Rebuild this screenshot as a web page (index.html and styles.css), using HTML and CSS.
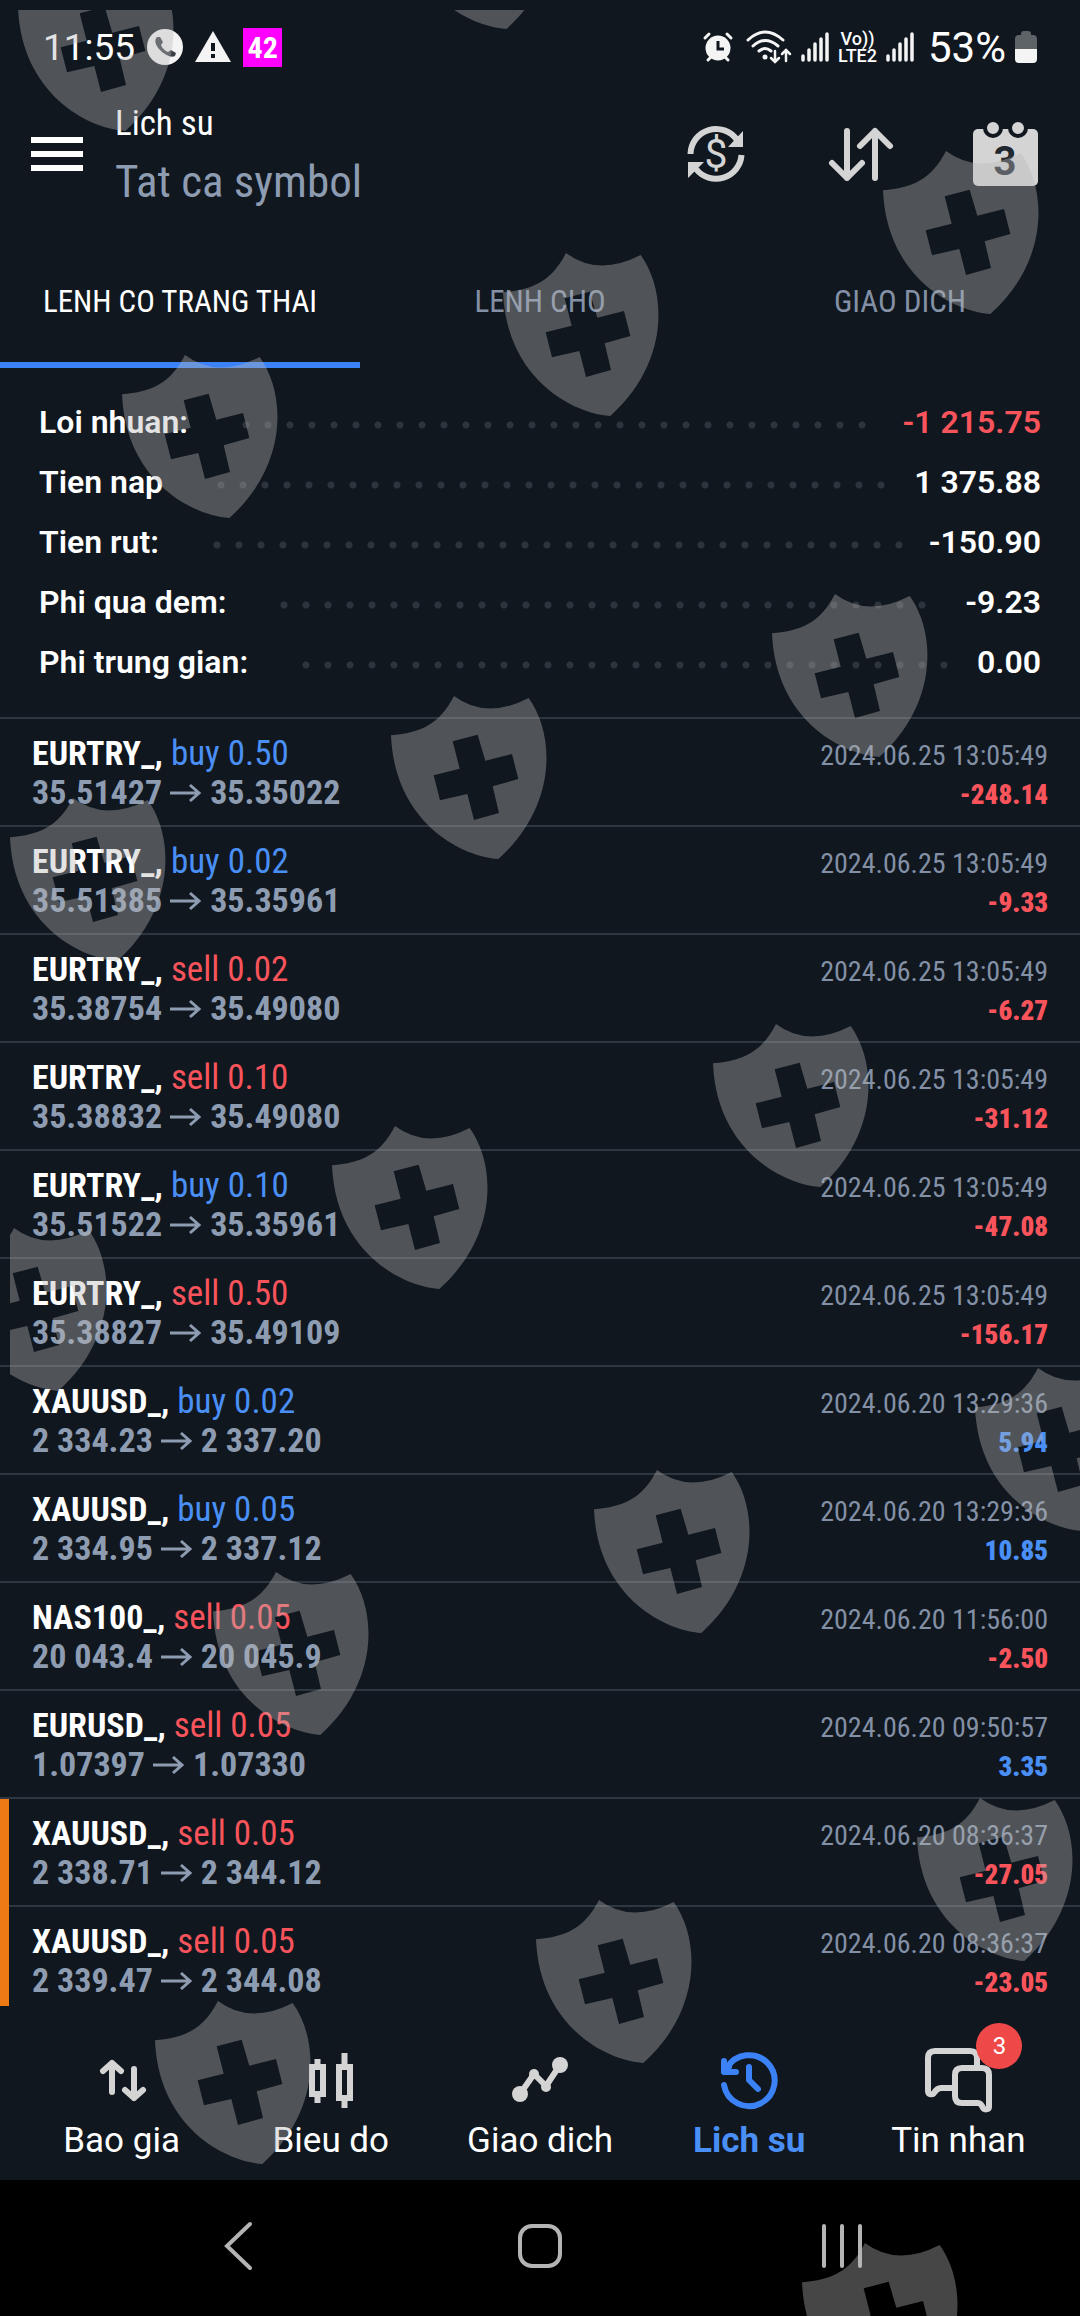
FILE: index.html
```
<!DOCTYPE html>
<html lang="vi">
<head>
<meta charset="utf-8">
<meta name="viewport" content="width=device-width, initial-scale=1">
<title>Lich su</title>
<link rel="stylesheet" href="styles.css">
</head>
<body>
<div class="app">
  <div class="status">
    <div class="status-group status-left">
      <span class="clock">11:55</span>
      <svg width="36" height="36" viewBox="0 0 36 36"><circle cx="18" cy="18" r="18" fill="#f4f4f4"/><path d="M10 8c-3 3-2 8 3 13s11 8 15 6l1-3-5-3-3 2c-3-1-6-4-7-7l2-3-3-5z" fill="#3c4147"/></svg>
      <svg width="36" height="32" viewBox="0 0 36 32"><path d="M18 0 36 31H0z" fill="#f4f4f4"/><path d="M16 12h4v8h-4zM16 23h4v4h-4z" fill="#10171f"/></svg>
      <span class="tag">42</span>
    </div>
    <div class="status-group status-right">
      <svg width="30" height="30" viewBox="0 0 30 30" fill="none" stroke="#f4f4f4" stroke-width="3" stroke-linecap="round"><circle cx="15" cy="16" r="12.500" fill="#f4f4f4" stroke="none"/><path d="M2 6l4-4M28 6l-4-4M5 28l3-3M25 28l-3-3"/><path d="M15 9v8h6" stroke="#10171f" stroke-linecap="butt"/></svg>
      <svg class="wifi" width="46" height="34" viewBox="0 0 46 34" fill="none" stroke="#f4f4f4" stroke-width="3" stroke-linecap="round"><path d="M2 10q17-16 35 0M7 16q12-11 25 0M13 21q6-5 12 0"/><circle cx="19" cy="27" r="2.500" fill="#f4f4f4" stroke="none"/><path d="M29 21v11M25 28l4 4 4-4M40 31V20M36 24l4-4 4 4" stroke-width="2.500"/></svg>
      <svg class="bars" width="28" height="30" viewBox="0 0 28 30" stroke="#f4f4f4" stroke-width="3.500" stroke-linecap="round"><path d="M2 24v4M8 18v10M14 12v16M20 7v21M26 2v26"/></svg>
      <span class="volte"><span>Vo))</span><span>LTE2</span></span>
      <svg class="bars" width="28" height="30" viewBox="0 0 28 30" stroke="#f4f4f4" stroke-width="3.500" stroke-linecap="round"><path d="M2 24v4M8 18v10M14 12v16M20 7v21M26 2v26"/></svg>
      <span class="percent">53%</span>
      <svg width="22" height="32" viewBox="0 0 22 32"><path d="M6 3q0-3 3-3h4q3 0 3 3v1h2q4 0 4 4v10H0V8q0-4 4-4h2z" fill="#5d6367"/><path d="M0 18h22v10q0 4-4 4H4q-4 0-4-4z" fill="#f4f4f4"/></svg>
    </div>
  </div>

  <header class="header">
    <button class="menu" aria-label="Menu"><span></span><span></span><span></span></button>
    <div class="titles">
      <h1>Lich su</h1>
      <p>Tat ca symbol</p>
    </div>
    <div class="actions">
      <button aria-label="Currency"><svg width="66" height="66" viewBox="0 0 66 66" fill="none" stroke="#d4d4d4" stroke-width="6"><path d="M7.500 33A25.500 25.500 0 0 1 54 19"/><path d="M58.500 34A25.500 25.500 0 0 1 13 48"/><path d="M60 10v16H45zM5 57V41h16z" fill="#d4d4d4" stroke="none"/><text x="33" y="47" text-anchor="middle" class="dollar">$</text></svg></button>
      <button aria-label="Sort"><svg width="66" height="66" viewBox="0 0 66 66" fill="none" stroke="#d4d4d4" stroke-width="6" stroke-linecap="round" stroke-linejoin="round"><path d="M19 10v47M4 42l15 15 15-15M47 57V10M32 25l15-15 15 15"/></svg></button>
      <button aria-label="Calendar"><svg width="66" height="66" viewBox="0 0 66 66"><rect x="0" y="8" width="65" height="57" rx="5" fill="#d4d4d4"/><g fill="#d4d4d4" stroke="#10171f" stroke-width="4"><circle cx="20" cy="7" r="8"/><circle cx="45" cy="7" r="8"/></g><text x="32" y="54" text-anchor="middle" class="day">3</text></svg></button>
    </div>
  </header>

  <nav class="tabs">
    <button class="tab active">LENH CO TRANG THAI</button>
    <button class="tab">LENH CHO</button>
    <button class="tab">GIAO DICH</button>
  </nav>

  <dl class="summary">
    <div><dt>Loi nhuan:</dt><dd><i class="dots"></i><b class="down">-1 215.75</b></dd></div>
    <div><dt>Tien nap</dt><dd><i class="dots"></i><b>1 375.88</b></dd></div>
    <div><dt>Tien rut:</dt><dd><i class="dots"></i><b>-150.90</b></dd></div>
    <div><dt>Phi qua dem:</dt><dd><i class="dots"></i><b>-9.23</b></dd></div>
    <div><dt>Phi trung gian:</dt><dd><i class="dots"></i><b>0.00</b></dd></div>
  </dl>

  <ul class="deals">
    <li><p><b>EURTRY_,</b> <span class="up">buy 0.50</span><time>2024.06.25 13:05:49</time></p><p class="price">35.51427 <svg class="arrow" viewBox="0 0 32 20"><path d="M0 10h29M20 2l9 8-9 8"/></svg> 35.35022<strong class="down">-248.14</strong></p></li>
    <li><p><b>EURTRY_,</b> <span class="up">buy 0.02</span><time>2024.06.25 13:05:49</time></p><p class="price">35.51385 <svg class="arrow" viewBox="0 0 32 20"><path d="M0 10h29M20 2l9 8-9 8"/></svg> 35.35961<strong class="down">-9.33</strong></p></li>
    <li><p><b>EURTRY_,</b> <span class="down">sell 0.02</span><time>2024.06.25 13:05:49</time></p><p class="price">35.38754 <svg class="arrow" viewBox="0 0 32 20"><path d="M0 10h29M20 2l9 8-9 8"/></svg> 35.49080<strong class="down">-6.27</strong></p></li>
    <li><p><b>EURTRY_,</b> <span class="down">sell 0.10</span><time>2024.06.25 13:05:49</time></p><p class="price">35.38832 <svg class="arrow" viewBox="0 0 32 20"><path d="M0 10h29M20 2l9 8-9 8"/></svg> 35.49080<strong class="down">-31.12</strong></p></li>
    <li><p><b>EURTRY_,</b> <span class="up">buy 0.10</span><time>2024.06.25 13:05:49</time></p><p class="price">35.51522 <svg class="arrow" viewBox="0 0 32 20"><path d="M0 10h29M20 2l9 8-9 8"/></svg> 35.35961<strong class="down">-47.08</strong></p></li>
    <li><p><b>EURTRY_,</b> <span class="down">sell 0.50</span><time>2024.06.25 13:05:49</time></p><p class="price">35.38827 <svg class="arrow" viewBox="0 0 32 20"><path d="M0 10h29M20 2l9 8-9 8"/></svg> 35.49109<strong class="down">-156.17</strong></p></li>
    <li><p><b>XAUUSD_,</b> <span class="up">buy 0.02</span><time>2024.06.20 13:29:36</time></p><p class="price">2 334.23 <svg class="arrow" viewBox="0 0 32 20"><path d="M0 10h29M20 2l9 8-9 8"/></svg> 2 337.20<strong class="up">5.94</strong></p></li>
    <li><p><b>XAUUSD_,</b> <span class="up">buy 0.05</span><time>2024.06.20 13:29:36</time></p><p class="price">2 334.95 <svg class="arrow" viewBox="0 0 32 20"><path d="M0 10h29M20 2l9 8-9 8"/></svg> 2 337.12<strong class="up">10.85</strong></p></li>
    <li><p><b>NAS100_,</b> <span class="down">sell 0.05</span><time>2024.06.20 11:56:00</time></p><p class="price">20 043.4 <svg class="arrow" viewBox="0 0 32 20"><path d="M0 10h29M20 2l9 8-9 8"/></svg> 20 045.9<strong class="down">-2.50</strong></p></li>
    <li><p><b>EURUSD_,</b> <span class="down">sell 0.05</span><time>2024.06.20 09:50:57</time></p><p class="price">1.07397 <svg class="arrow" viewBox="0 0 32 20"><path d="M0 10h29M20 2l9 8-9 8"/></svg> 1.07330<strong class="up">3.35</strong></p></li>
    <li class="marked"><p><b>XAUUSD_,</b> <span class="down">sell 0.05</span><time>2024.06.20 08:36:37</time></p><p class="price">2 338.71 <svg class="arrow" viewBox="0 0 32 20"><path d="M0 10h29M20 2l9 8-9 8"/></svg> 2 344.12<strong class="down">-27.05</strong></p></li>
    <li class="marked"><p><b>XAUUSD_,</b> <span class="down">sell 0.05</span><time>2024.06.20 08:36:37</time></p><p class="price">2 339.47 <svg class="arrow" viewBox="0 0 32 20"><path d="M0 10h29M20 2l9 8-9 8"/></svg> 2 344.08<strong class="down">-23.05</strong></p></li>
  </ul>

  <nav class="dock">
    <a href="#quotes"><svg viewBox="0 0 64 64" stroke-width="6" stroke-linecap="round" stroke-linejoin="round"><path d="M22 43V14M13 22l9-8 9 8M44 20v29M35 41l9 8 9-8"/></svg>Bao gia</a>
    <a href="#charts"><svg viewBox="0 0 64 64" stroke-width="6"><path d="M13 18h11v27H13zM18.500 10v7M18.500 46v8M40 18h11v31H40zM45.500 4v13M45.500 50v9"/></svg>Bieu do</a>
    <a href="#trade"><svg viewBox="0 0 64 64" stroke-width="6" stroke-linejoin="round"><path d="M12 45 26 25 38 37 52 16"/><g fill="#d4d4d4" stroke="none"><circle cx="12" cy="45" r="8"/><circle cx="26" cy="25" r="5"/><circle cx="38" cy="38" r="5"/><circle cx="52" cy="16" r="8"/></g></svg>Giao dich</a>
    <a href="#history" class="current"><svg viewBox="0 0 64 64" stroke-width="6" stroke-linecap="round" stroke-linejoin="round"><path d="M7 36A25.500 25.500 0 1 0 10 19M7 12v11h12M7 23l5-5"/><path d="M32 18v13l9 9"/></svg>Lich su</a>
    <a href="#messages"><span class="messages"><svg viewBox="0 0 64 64" stroke-width="6" stroke-linejoin="round"><path d="M51 18V9q0-7-7-7H9Q2 2 2 9v33c0 4 5 4 6 2q3-5 7-5h13"/><path d="M36 19h20q7 0 7 7v32c0 3-5 3-6 1q-2-5-5-5H36q-7 0-7-7V26q0-7 7-7z"/></svg><span class="badge">3</span></span>Tin nhan</a>
  </nav>

  <div class="system">
    <button aria-label="Back"><svg width="48" height="48" viewBox="0 0 48 48"><path d="M35 2 12 24l23 22"/></svg></button>
    <button aria-label="Home"><svg width="48" height="48" viewBox="0 0 48 48"><rect x="4" y="4" width="40" height="40" rx="12"/></svg></button>
    <button aria-label="Recents"><svg width="48" height="48" viewBox="0 0 48 48"><path d="M7 4v40M25 4v40M43 4v40"/></svg></button>
  </div>

  <svg class="watermark" aria-hidden="true">
    <defs>
      <clipPath id="edge"><rect x="10" y="10" width="100%" height="100%"/></clipPath>
      <symbol id="shield" viewBox="0 0 468 492" width="156" height="164" overflow="visible">
        <path fill-rule="evenodd" d="M0 118C90 110 145 85 189 0Q285 72 413 6C492 115 500 330 322 489 200 480 10 370 0 118zM185 136l75-20 23 78 80-20 19 75-77 22 19 80-75 21-20-78-82 19-19-75 78-20z"/>
      </symbol>
    </defs>
    <g clip-path="url(#edge)">
      <use href="#shield" x="18" y="-32"/><use href="#shield" x="399" y="-134"/>
      <use href="#shield" x="122" y="355"/><use href="#shield" x="503" y="253"/><use href="#shield" x="883" y="151"/>
      <use href="#shield" x="10" y="798"/><use href="#shield" x="391" y="696"/><use href="#shield" x="772" y="594"/>
      <use href="#shield" x="-49" y="1228"/><use href="#shield" x="332" y="1126"/><use href="#shield" x="713" y="1024"/>
      <use href="#shield" x="213" y="1572"/><use href="#shield" x="594" y="1470"/><use href="#shield" x="975" y="1368"/>
      <use href="#shield" x="155" y="2001"/><use href="#shield" x="536" y="1900"/><use href="#shield" x="917" y="1798"/>
      <use href="#shield" x="802" y="2243"/>
    </g>
  </svg>
</div>
</body>
</html>
```
FILE: styles.css
```
* { box-sizing: border-box; margin: 0; padding: 0; }

body {
  background: #10171f;
  color: #fff;
  font-family: "Roboto Condensed", Roboto, sans-serif;
}

button { background: none; border: 0; color: inherit; font: inherit; }
a { color: inherit; text-decoration: none; }
svg { display: block; flex: none; overflow: visible; }

.app {
  position: relative;
  display: flex;
  flex-direction: column;
  min-height: 100vh;
  overflow: hidden;
}

.status {
  display: flex;
  justify-content: space-between;
  height: 94px;
  padding: 0 43px;
}
.status-group { display: flex; align-items: center; font-family: Roboto, sans-serif; }
.status-left { gap: 12px; }
.status-right { gap: 9px; }
.clock { font-size: 37px; }
.tag {
  width: 39px;
  line-height: 39px;
  background: #f0f;
  font-family: "Roboto Condensed", Roboto, sans-serif;
  font-size: 30px;
  font-weight: 700;
  text-align: center;
}
.wifi { margin-left: 4px; }
.volte { display: flex; flex-direction: column; font-size: 18px; font-weight: 500; line-height: 17px; text-align: center; }
.percent { margin-left: 5px; font-size: 42px; }

.header { display: flex; align-items: center; height: 140px; padding: 0 41px 20px 31px; }
.menu { display: flex; flex-direction: column; gap: 8px; width: 52px; margin-right: 32px; }
.menu span { height: 6px; background: #fff; }
.titles h1 { font-size: 35px; font-weight: 400; line-height: 56px; }
.titles p { font-size: 45px; line-height: 60px; color: #8e9cb2; }
.actions { display: flex; gap: 79px; margin-left: auto; }
.dollar { fill: #d4d4d4; stroke: none; font: 400 41px Roboto, sans-serif; }
.day { fill: #22282f; font: 700 40px Roboto, sans-serif; }

.tabs { display: grid; grid-template-columns: repeat(3, 1fr); }
.tab { height: 134px; border-bottom: 6px solid transparent; padding-top: 6px; font-size: 31px; color: #8390a5; }
.tab.active { color: #fff; border-color: #3b82f6; }

.summary { padding: 24px 39px 25px; font-family: Roboto, sans-serif; font-size: 32px; font-weight: 600; line-height: 60px; }
.summary div { display: flex; }
.summary dd { display: flex; flex: 1; }
.summary b { margin-left: auto; font-weight: 600; }
.dots { display: flex; flex: 1; margin: 0 18px 0 47px; }
.dots::before {
  content: "";
  width: round(down, 100%, 22px);
  height: 22px;
  margin-top: 22px;
  background: radial-gradient(circle, #2d343c 3px, transparent 4px) 0 0 / 22px 22px repeat-x;
}

.up { color: #4a8ff5; }
.down { color: #f9545c; }

.deals { list-style: none; }
.deals li {
  padding: 15px 32px 13px;
  border-top: 2px solid #2e3640;
  font-size: 35px;
}
.deals p { display: flex; align-items: baseline; gap: 8px; height: 39px; line-height: 39px; }
.deals b { font-size: 34px; }
.deals .price { color: #8e9cb2; font-size: 34px; font-weight: 700; }
.deals time, .deals strong { margin-left: auto; line-height: 30px; }
.deals time { font-size: 28px; color: #8390a5; }
.deals strong { font-size: 27px; }
.arrow { width: 32px; height: 20px; align-self: center; fill: none; stroke: #8e9cb2; stroke-width: 3; }
.deals .marked { position: relative; }
.marked::before { content: ""; position: absolute; inset: 0 auto 0 0; width: 9px; background: #ee7a16; }
.marked + .marked::before { top: -2px; }
.deals li:last-child { padding-bottom: 6px; }

.dock {
  display: grid;
  grid-template-columns: repeat(5, 1fr);
  padding: 43px 17px 20px;
  font-family: Roboto, sans-serif;
  font-size: 35px;
  line-height: 38px;
}
.dock a { display: flex; flex-direction: column; align-items: center; gap: 9px; }
.dock svg { width: 64px; height: 64px; fill: none; stroke: #d4d4d4; }
.dock .current { color: #4a8ff5; font-weight: 700; }
.dock .current svg { stroke: #3b82f6; }
.messages { position: relative; }
.badge {
  position: absolute;
  left: 50px;
  top: -26px;
  width: 46px;
  border-radius: 50%;
  background: #ef4848;
  font-size: 24px;
  line-height: 46px;
  text-align: center;
}

.system {
  display: flex;
  flex: 1;
  align-items: center;
  justify-content: space-around;
  min-height: 132px;
  padding: 0 88px 4px;
  background: #000;
}
.system svg { fill: none; stroke: #b4b4b4; stroke-width: 4; stroke-linecap: round; }

.watermark {
  position: absolute;
  inset: 0;
  width: 100%;
  height: 100%;
  fill: #b8b8b8;
  opacity: .38;
  pointer-events: none;
}
```
